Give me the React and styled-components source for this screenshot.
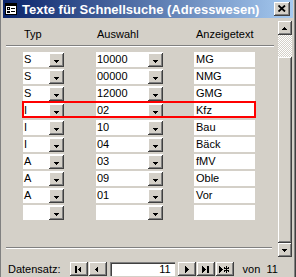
import React from "react"
import styled, { createGlobalStyle } from "styled-components"

const GlobalStyle = createGlobalStyle`
  html, body {
    margin: 0;
    padding: 0;
    background: #d4d0c8;
  }
  body {
    width: 296px;
    height: 277px;
    overflow: hidden;
    font-family: "Liberation Sans", Arial, sans-serif;
    font-size: 11px;
    color: #000;
  }
`

const raised = `
  background: #d4d0c8;
  box-shadow: inset -1px -1px #404040, inset 1px 1px #ffffff, inset -2px -2px #808080;
`

const Window = styled.div`
  width: 296px;
  height: 277px;
  box-sizing: border-box;
  padding: 0 4px;
  display: flex;
  flex-direction: column;
  background: #d4d0c8;
  box-shadow: inset 1px 0 #808080, inset -1px 0 #404040, inset -2px 0 #808080;
  overflow: hidden;
`

const TitleBar = styled.div`
  height: 18px;
  margin: 0 -1px;
  padding: 0 3px 0 2px;
  display: flex;
  align-items: center;
  background: linear-gradient(to right, #0a246a, #a6caf0);
`

const TitleText = styled.div`
  flex: 1;
  margin-left: 5px;
  padding-top: 2px;
  color: #fff;
  font-weight: bold;
  font-size: 13px;
  line-height: 16px;
  white-space: nowrap;
`

const CloseButton = styled.div`
  ${raised}
  width: 16px;
  height: 14px;
  display: flex;
  align-items: center;
  justify-content: center;
  box-sizing: border-box;
  padding: 0 1px 1px 0;
`

const Body = styled.div`
  flex: 1;
  margin-top: 3px;
  display: flex;
  min-height: 0;
`

const FormArea = styled.div`
  flex: 1;
  display: flex;
  flex-direction: column;
  padding-top: 7px;
`

const Grid = styled.div`
  display: grid;
  grid-template-columns: 73px 98px 61px;
  padding-left: 19px;
`

const HeaderLabel = styled.div`
  line-height: 13px;
  padding-left: ${p => p.pad}px;
`

const Etched = styled.div`
  height: 0;
  border-top: 1px solid #808080;
  border-bottom: 1px solid #ffffff;
  margin: ${p => p.m};
`

const Rows = styled.div`
  margin-top: 5px;
  display: flex;
  flex-direction: column;
  gap: 2px;
`

const Row = styled(Grid)`
  position: relative;
  height: 15px;
`

const Highlight = styled.div`
  position: absolute;
  left: 18px;
  width: 234px;
  top: -2px;
  bottom: 0;
  border: 2px solid #ff0000;
  box-sizing: border-box;
  pointer-events: none;
`

const Cell = styled.div`
  width: ${p => p.w}px;
  height: 15px;
  background: #fff;
  display: flex;
`

const CellText = styled.div`
  flex: 1;
  line-height: 15px;
  padding-left: ${p => p.pad}px;
  white-space: nowrap;
  overflow: hidden;
`

const DropButton = styled.div`
  ${raised}
  width: 15px;
  height: 14px;
  margin-top: 1px;
  display: flex;
  align-items: center;
  justify-content: center;
  padding: 2px 1px 0 0;
  box-sizing: border-box;
`

const Spacer = styled.div`
  flex: 1;
`

const Scrollbar = styled.div`
  width: 14px;
  display: flex;
  flex-direction: column;
`

const ScrollButton = styled.div`
  ${raised}
  height: 14px;
  display: flex;
  align-items: center;
  justify-content: center;
  padding-right: 1px;
`

const Track = styled.div`
  height: 22px;
  background: repeating-conic-gradient(#ffffff 0 25%, #d4d0c8 0 50%) 0 0 / 2px 2px;
`

const Thumb = styled.div`
  ${raised}
  flex: 1;
`

const NavBar = styled.div`
  height: 20px;
  display: flex;
  align-items: flex-end;
  padding: 0 0 1px 4px;
  box-sizing: border-box;
`

const NavLabel = styled.div`
  line-height: 14px;
  margin-right: ${p => p.mr || 0}px;
  margin-left: ${p => p.ml || 0}px;
  white-space: nowrap;
`

const NavButton = styled.div`
  ${raised}
  width: 18px;
  height: 14px;
  margin-right: 1px;
  display: flex;
  align-items: center;
  justify-content: center;
  padding-right: 1px;
  box-sizing: border-box;
`

const RecordBox = styled.div`
  width: 65px;
  height: 14px;
  margin: 0 3px 0 2px;
  background: #fff;
  box-sizing: border-box;
  box-shadow: inset 1px 1px #808080, inset 2px 2px #404040, inset -1px -1px #ffffff;
  text-align: right;
  padding-right: 4px;
  line-height: 14px;
`

const FormIcon = () => (
  <svg width="12" height="12" viewBox="0 0 12 12" shapeRendering="crispEdges">
    <rect x="0.5" y="0.5" width="11" height="11" fill="#fff" stroke="#000" />
    <rect x="1" y="1" width="10" height="2" fill="#000" />
    <rect x="2.5" y="4.5" width="2" height="2" fill="none" stroke="#000" />
    <rect x="6" y="5" width="4" height="1" fill="#000" />
    <rect x="2.5" y="8.5" width="2" height="1" fill="none" stroke="#000" />
    <rect x="6" y="8" width="4" height="1" fill="#000" />
  </svg>
)

const CloseIcon = () => (
  <svg width="8" height="7" viewBox="0 0 8 7">
    <path d="M0.5 0.5 L7 6.5 M7 0.5 L0.5 6.5" stroke="#000" strokeWidth="1.8" />
  </svg>
)

const Tri = ({ dir = "down" }) => {
  const paths = {
    down: "M0 0 H5 V1 H4 V2 H3 V3 H2 V2 H1 V1 H0 Z",
    up: "M2 0 H3 V1 H4 V2 H5 V3 H0 V2 H1 V1 H2 Z",
  }
  return (
    <svg width="5" height="3" viewBox="0 0 5 3" shapeRendering="crispEdges">
      <path d={paths[dir]} fill="#000" />
    </svg>
  )
}

const NavGlyph = ({ kind }) => {
  const shapes = {
    first: (
      <>
        <rect x="2" y="0" width="2" height="7" fill="#000" />
        <path d="M8 0 V7 L4.5 3.5 Z" fill="#000" />
      </>
    ),
    prev: <path d="M6 0 V7 L2.5 3.5 Z" fill="#000" />,
    next: <path d="M4 0 V7 L7.5 3.5 Z" fill="#000" />,
    last: (
      <>
        <path d="M2 0 V7 L5.5 3.5 Z" fill="#000" />
        <rect x="7" y="0" width="2" height="7" fill="#000" />
      </>
    ),
    new: (
      <>
        <path d="M0 0 V7 L3.5 3.5 Z" fill="#000" />
        <path d="M7.5 0 V7 M5 1.5 L10 5.5 M10 1.5 L5 5.5" stroke="#000" strokeWidth="1" />
      </>
    ),
  }
  return (
    <svg width="11" height="7" viewBox="0 0 11 7" shapeRendering="crispEdges">
      {shapes[kind]}
    </svg>
  )
}

const rows = [
  ["S", "10000", "MG"],
  ["S", "00000", "NMG"],
  ["S", "12000", "GMG"],
  ["I", "02", "Kfz"],
  ["I", "10", "Bau"],
  ["I", "04", "Bäck"],
  ["A", "03", "fMV"],
  ["A", "09", "Oble"],
  ["A", "01", "Vor"],
  ["", "", ""],
]

const Combo = ({ w, value }) => (
  <Cell w={w}>
    <CellText pad={1}>{value}</CellText>
    <DropButton>
      <Tri />
    </DropButton>
  </Cell>
)

export default function App() {
  return (
    <>
      <GlobalStyle />
      <Window>
        <TitleBar>
          <FormIcon />
          <TitleText>Texte für Schnellsuche (Adresswesen)</TitleText>
          <CloseButton>
            <CloseIcon />
          </CloseButton>
        </TitleBar>
        <Body>
          <FormArea>
            <Grid>
              <HeaderLabel pad={1}>Typ</HeaderLabel>
              <HeaderLabel pad={1}>Auswahl</HeaderLabel>
              <HeaderLabel pad={2}>Anzeigetext</HeaderLabel>
            </Grid>
            <Etched m="4px 4px 0 2px" />
            <Rows>
              {rows.map(([typ, sel, text], i) => (
                <Row key={i}>
                  <Combo w={41} value={typ} />
                  <Combo w={67} value={sel} />
                  <Cell w={61}>
                    <CellText pad={2}>{text}</CellText>
                  </Cell>
                  {i === 3 && <Highlight />}
                </Row>
              ))}
            </Rows>
            <Spacer />
            <Etched m="0 6px 8px 2px" />
          </FormArea>
          <Scrollbar>
            <ScrollButton>
              <Tri dir="up" />
            </ScrollButton>
            <Track />
            <Thumb />
            <ScrollButton>
              <Tri />
            </ScrollButton>
          </Scrollbar>
        </Body>
        <NavBar>
          <NavLabel mr={9}>Datensatz:</NavLabel>
          <NavButton><NavGlyph kind="first" /></NavButton>
          <NavButton><NavGlyph kind="prev" /></NavButton>
          <RecordBox>11</RecordBox>
          <NavButton><NavGlyph kind="next" /></NavButton>
          <NavButton><NavGlyph kind="last" /></NavButton>
          <NavButton><NavGlyph kind="new" /></NavButton>
          <NavLabel ml={8}>von&nbsp;&nbsp;11</NavLabel>
        </NavBar>
      </Window>
    </>
  )
}
